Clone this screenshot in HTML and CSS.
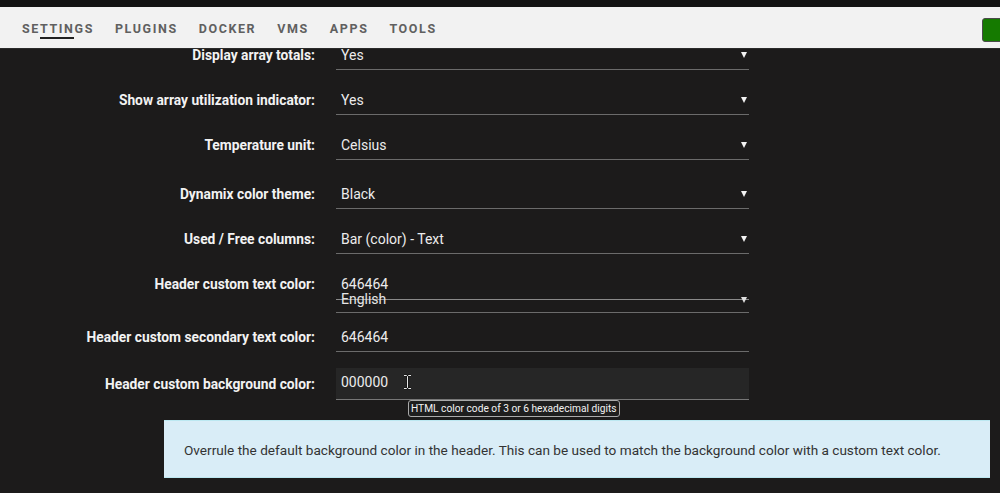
FILE: index.html
```html
<!DOCTYPE html>
<html lang="en">
<head>
<meta charset="utf-8">
<title>Display Settings</title>
<link rel="stylesheet" href="styles.css">
</head>
<body>
<div class="topstrip"></div>
<header class="nav">
  <nav class="nav-items">
    <span class="nav-item nav-item--active">SE<span class="nav-mark">TTIN</span>GS</span>
    <span class="nav-item">PLUGINS</span>
    <span class="nav-item">DOCKER</span>
    <span class="nav-item">VMS</span>
    <span class="nav-item">APPS</span>
    <span class="nav-item">TOOLS</span>
  </nav>
  <span class="status-btn"></span>
</header>
<main class="form">
  <div class="row row--first">
    <label class="label">Display array totals:</label>
    <div class="field select">Yes<span class="arrow"></span></div>
  </div>
  <div class="row">
    <label class="label">Show array utilization indicator:</label>
    <div class="field select">Yes<span class="arrow"></span></div>
  </div>
  <div class="row">
    <label class="label">Temperature unit:</label>
    <div class="field select">Celsius<span class="arrow"></span></div>
  </div>
  <div class="row row--loose">
    <label class="label">Dynamix color theme:</label>
    <div class="field select">Black<span class="arrow"></span></div>
  </div>
  <div class="row">
    <label class="label">Used / Free columns:</label>
    <div class="field select">Bar (color) - Text<span class="arrow"></span></div>
  </div>
  <div class="row">
    <label class="label">Header custom text color:</label>
    <div class="field field--tall">646464
      <div class="ghost-select">English<span class="arrow"></span></div>
    </div>
  </div>
  <div class="row row--tight">
    <label class="label">Header custom secondary text color:</label>
    <div class="field">646464</div>
  </div>
  <div class="row row--input">
    <label class="label">Header custom background color:</label>
    <div class="field field--focus">000000
      <svg class="ibeam" width="9" height="16" viewBox="0 0 9 16" aria-hidden="true">
        <path d="M1 1.5h2.5l1 1 1-1H8M4.5 2.5v11M1 14.5h2.5l1-1 1 1H8" fill="none" stroke="#111" stroke-width="2.2"/>
        <path d="M1 1.5h2.5l1 1 1-1H8M4.5 2.5v11M1 14.5h2.5l1-1 1 1H8" fill="none" stroke="#e8e8e8" stroke-width="1"/>
      </svg>
      <div class="tooltip">HTML color code of 3 or 6 hexadecimal digits</div>
    </div>
  </div>
  <div class="help">Overrule the default background color in the header. This can be used to match the background color with a custom text color.</div>
</main>
</body>
</html>
```
FILE: styles.css
```css
* { box-sizing: border-box; }
html, body { margin: 0; padding: 0; }
body {
  background: #1c1b1b;
  font-family: Roboto, "Noto Sans", sans-serif;
  color: #f2f2f2;
  height: 493px;
  overflow: hidden;
}
.topstrip { height: 7px; background: #141414; }
.nav {
  position: relative;
  z-index: 2;
  height: 42px;
  background: #f2f2f2;
  border-bottom: 1px solid #2b2b2b;
  display: flex;
  align-items: center;
  justify-content: space-between;
  padding-left: 22px;
}
.nav-items { display: flex; gap: 21px; padding-top: 2px; }
.nav-item {
  font-size: 12.5px;
  font-weight: 700;
  letter-spacing: 1.6px;
  color: #606060;
  line-height: 16px;
}
.nav-mark { position: relative; }
.nav-mark::after {
  content: "";
  position: absolute;
  left: 0; right: 1px;
  bottom: -3px;
  height: 2px;
  background: #202020;
}
.status-btn {
  width: 24px;
  height: 24px;
  margin-right: -6px;
  background: #157a00;
  border: 1px solid #4a4a4a;
  border-radius: 3px;
  align-self: center;
  margin-top: 4px;
}
.form {
  margin-top: -10px;
  display: flex;
  flex-direction: column;
}
.row {
  display: grid;
  grid-template-columns: 315px 413px;
  column-gap: 21px;
  margin-top: 14px;
}
.row--first { margin-top: 0; }
.row--loose { margin-top: 18px; }
.row--tight { margin-top: 8px; }
.row--input { margin-top: 16px; }
.label {
  text-align: right;
  font-weight: 700;
  font-size: 13.8px;
  line-height: 18px;
  padding-top: 7px;
  color: #f2f2f2;
}
.field {
  position: relative;
  font-size: 14px;
  line-height: 18px;
  padding: 7px 5px 5px 5px;
  height: 31px;
  border-bottom: 1px solid #6b6b6b;
  color: #ececec;
}
.field--tall { height: 45px; }
.field--focus {
  background: #262626;
  padding-top: 5px;
  height: 32px;
  border-bottom-color: #777;
}
.arrow {
  position: absolute;
  right: 2px;
  top: 13px;
  width: 0; height: 0;
  border-left: 3.5px solid transparent;
  border-right: 3.5px solid transparent;
  border-top: 6px solid #f2f2f2;
}
.ghost-select {
  position: absolute;
  left: 0; right: 0;
  top: 23px;
  padding-left: 5px;
  font-size: 14px;
  line-height: 16px;
  height: 9px;
  border-bottom: 1px solid #8a8a8a;
  color: #e6e6e6;
  overflow: visible;
}
.ghost-select .arrow { top: 6px; border-top-color: #e0e0e0; }
.ibeam { position: absolute; left: 67px; top: 6px; }
.tooltip {
  position: absolute;
  left: 72px;
  top: 32px;
  z-index: 3;
  background: #1e1e1e;
  border: 1px solid #aaa;
  border-radius: 3px;
  color: #f2f2f2;
  font-size: 10.2px;
  line-height: 15px;
  padding: 0 2px;
  white-space: nowrap;
}
.help {
  margin: 20px 10px 0 164px;
  height: 58px;
  background: #d9edf7;
  border-top: 1px solid #bce8f1;
  border-bottom: 1px solid #bce8f1;
  color: #333;
  font-size: 13.6px;
  line-height: 18px;
  padding: 20px 20px 0 20px;
}
```
